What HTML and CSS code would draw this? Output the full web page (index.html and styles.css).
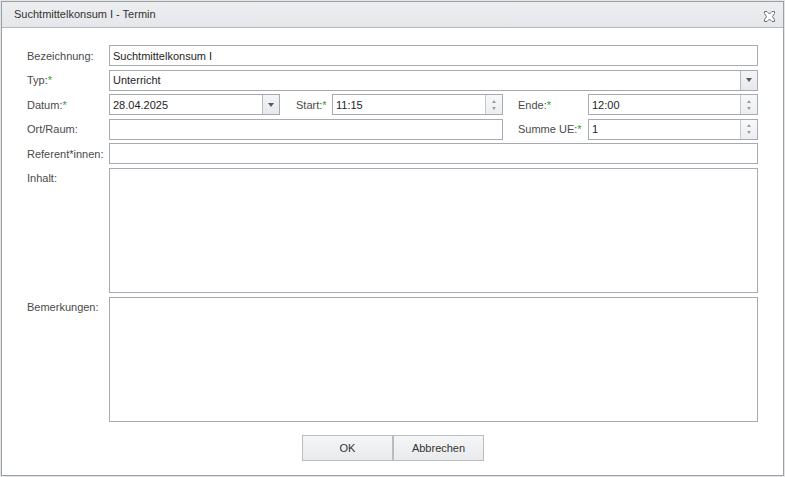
FILE: index.html
```html
<!DOCTYPE html>
<html lang="de">
<head>
<meta charset="utf-8">
<title>Suchtmittelkonsum I - Termin</title>
<link rel="stylesheet" href="styles.css">
</head>
<body>
<div class="dialog">
  <div class="titlebar">
    <span class="title">Suchtmittelkonsum I - Termin</span>
    <span class="close">
      <svg width="13" height="11" viewBox="0 0 13 11"><path d="M1.5 0.5 H4 L6.5 3 L9 0.5 H11.5 V2.5 L9.5 5.5 L11.5 8.5 V10.5 H9 L6.5 8 L4 10.5 H1.5 V8.5 L3.5 5.5 L1.5 2.5 Z" fill="#fff" stroke="#6b6e73" stroke-width="1"/></svg>
    </span>
  </div>
  <div class="form">
    <div class="row">
      <label class="lbl">Bezeichnung:</label>
      <div class="field grow"><span class="val">Suchtmittelkonsum I</span></div>
    </div>
    <div class="row">
      <label class="lbl">Typ:<span class="req">*</span></label>
      <div class="field grow"><span class="val">Unterricht</span><span class="drop"><i class="tri"></i></span></div>
    </div>
    <div class="row">
      <label class="lbl">Datum:<span class="req">*</span></label>
      <div class="field w171"><span class="val">28.04.2025</span><span class="drop"><i class="tri"></i></span></div>
      <label class="lbl2 start">Start:<span class="req">*</span></label>
      <div class="field w171"><span class="val">11:15</span><span class="spin"><i class="up"></i><i class="dn"></i></span></div>
      <label class="lbl2 end">Ende:<span class="req">*</span></label>
      <div class="field grow"><span class="val">12:00</span><span class="spin"><i class="up"></i><i class="dn"></i></span></div>
    </div>
    <div class="row">
      <label class="lbl">Ort/Raum:</label>
      <div class="field w394"></div>
      <label class="lbl2 end">Summe UE:<span class="req">*</span></label>
      <div class="field grow"><span class="val">1</span><span class="spin"><i class="up"></i><i class="dn"></i></span></div>
    </div>
    <div class="row">
      <label class="lbl">Referent*innen:</label>
      <div class="field grow"></div>
    </div>
    <div class="row tall">
      <label class="lbl top">Inhalt:</label>
      <div class="field grow area"></div>
    </div>
    <div class="row tall">
      <label class="lbl top">Bemerkungen:</label>
      <div class="field grow area"></div>
    </div>
    <div class="buttons">
      <button class="btn">OK</button>
      <button class="btn">Abbrechen</button>
    </div>
  </div>
</div>
</body>
</html>
```

FILE: styles.css
```css
html, body {
  margin: 0;
  padding: 0;
}
body {
  background: #e4e5e7;
  font-family: "Liberation Sans", Arial, sans-serif;
  font-size: 11px;
  width: 785px;
  height: 477px;
  overflow: hidden;
}
.dialog {
  margin: 1px 0 0 1px;
  width: 781px;
  height: 473px;
  border: 1px solid #9c9fa5;
  background: #fff;
  display: flex;
  flex-direction: column;
}
.titlebar {
  height: 25px;
  border-bottom: 1px solid #b3b6bb;
  background: linear-gradient(#eceef0, #e5e7ea);
  display: flex;
  align-items: center;
  justify-content: space-between;
  padding: 0 7px 0 12px;
}
.title {
  color: #333;
  font-size: 11px;
  position: relative;
  top: -1px;
}
.close {
  display: flex;
  align-items: center;
  margin-top: 3px;
}
.form {
  padding: 17px 25px 0 25px;
  display: flex;
  flex-direction: column;
  gap: 3.6px;
}
.row {
  display: flex;
  align-items: center;
  height: 21px;
}
.row.tall {
  height: 125px;
  align-items: stretch;
}
.row.tall + .row.tall {
  margin-top: 0.4px;
}
.lbl {
  width: 82px;
  flex: none;
  color: #4a4a4a;
  white-space: nowrap;
}
.lbl.top {
  line-height: 21px;
}
.lbl2 {
  flex: none;
  color: #4a4a4a;
  padding-left: 15px;
  box-sizing: border-box;
  white-space: nowrap;
}
.lbl2.start { width: 52px; padding-left: 16px; }
.lbl2.end { width: 85px; }
.req {
  color: #2fa12f;
}
.field {
  box-sizing: border-box;
  height: 21px;
  border: 1px solid #a7aab0;
  background: #fff;
  display: flex;
  align-items: center;
  color: #1e1e1e;
  position: relative;
}
.field.grow { flex: 1; }
.field.w171 { width: 171px; flex: none; }
.field.w394 { width: 394px; flex: none; }
.field.area { height: 125px; }
.val {
  flex: 1;
  padding-left: 3px;
  white-space: nowrap;
}
.drop {
  width: 16px;
  align-self: stretch;
  border-left: 1px solid #b6b9be;
  background: linear-gradient(#f3f4f6, #e6e8eb);
  display: flex;
  align-items: center;
  justify-content: center;
}
.tri {
  width: 0;
  height: 0;
  border-left: 3.5px solid transparent;
  border-right: 3.5px solid transparent;
  border-top: 4px solid #555a60;
}
.spin {
  width: 16px;
  align-self: stretch;
  border-left: 1px solid #c4c7cc;
  background: linear-gradient(#f7f8f9, #eceef0);
  display: flex;
  flex-direction: column;
  align-items: center;
  justify-content: center;
  gap: 4px;
}
.up {
  width: 0;
  height: 0;
  border-left: 2.5px solid transparent;
  border-right: 2.5px solid transparent;
  border-bottom: 3px solid #9a9ea4;
}
.dn {
  width: 0;
  height: 0;
  border-left: 2.5px solid transparent;
  border-right: 2.5px solid transparent;
  border-top: 3px solid #9a9ea4;
}
.buttons {
  display: flex;
  justify-content: center;
  margin-top: 9.4px;
  margin-left: 1px;
}
.btn {
  width: 91px;
  height: 26px;
  margin: 0;
  border: 1px solid #b9bcc1;
  background: linear-gradient(#f5f6f7, #e8eaec);
  font-family: "Liberation Sans", Arial, sans-serif;
  font-size: 11px;
  color: #333;
  padding: 0;
}
```
